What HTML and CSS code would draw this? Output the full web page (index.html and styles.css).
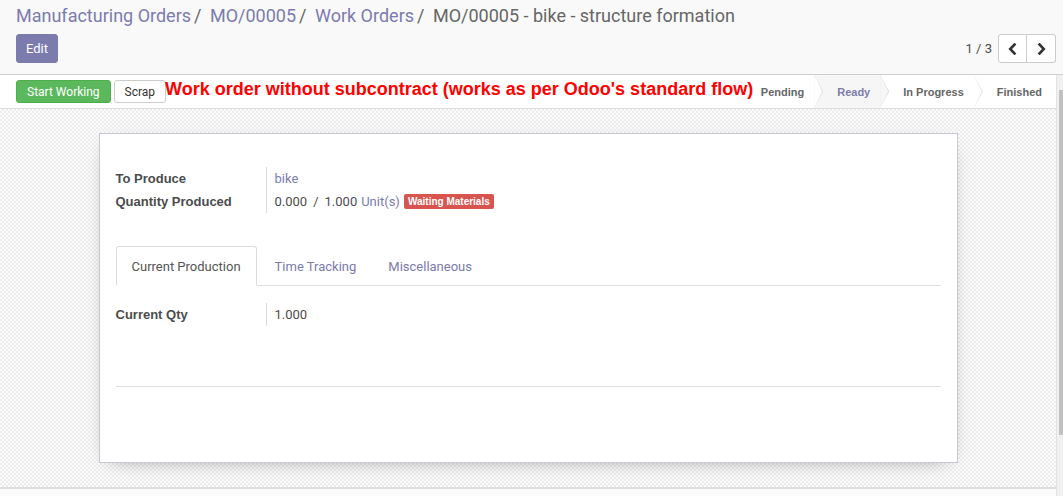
FILE: index.html
```html
<!DOCTYPE html>
<html>
<head>
<meta charset="utf-8">
<link rel="stylesheet" href="styles.css">
</head>
<body>
<div class="control-panel">
  <div class="breadcrumb">
    <a class="crumb">Manufacturing Orders</a><span class="sep">/</span>
    <a class="crumb">MO/00005</a><span class="sep">/</span>
    <a class="crumb">Work Orders</a><span class="sep">/</span>
    <span class="crumb current">MO/00005 - bike - structure formation</span>
  </div>
  <div class="cp-row">
    <button class="btn btn-edit">Edit</button>
    <div class="pager">
      <span class="pager-value">1 / 3</span>
      <div class="pager-btns">
        <button class="pbtn"><svg width="9" height="12" viewBox="0 0 9 12"><path d="M6.5 1.5 L2.2 6 L6.5 10.5" fill="none" stroke="#333" stroke-width="2.6" stroke-linecap="square"/></svg></button>
        <button class="pbtn"><svg width="9" height="12" viewBox="0 0 9 12"><path d="M2.5 1.5 L6.8 6 L2.5 10.5" fill="none" stroke="#333" stroke-width="2.6" stroke-linecap="square"/></svg></button>
      </div>
    </div>
  </div>
</div>
<div class="content">
  <div class="main">
    <div class="statusbar">
      <div class="sb-buttons">
        <button class="btn btn-green">Start Working</button>
        <button class="btn btn-white">Scrap</button>
      </div>
      <div class="note">Work order without subcontract (works as per Odoo's standard flow)</div>
      <div class="stages">
        <div class="stage first">Pending</div>
        <div class="stage active">Ready</div>
        <div class="stage">In Progress</div>
        <div class="stage last">Finished</div>
      </div>
    </div>
    <div class="sheet-bg">
      <div class="sheet">
        <div class="fields">
          <div class="label">To Produce</div>
          <div class="value"><a class="link">bike</a></div>
          <div class="label">Quantity Produced</div>
          <div class="value"><span>0.000</span><span class="slash">/</span><span>1.000</span><a class="link unit">Unit(s)</a><span class="badge">Waiting Materials</span></div>
        </div>
        <div class="tabs">
          <div class="tab active">Current Production</div>
          <div class="tab">Time Tracking</div>
          <div class="tab">Miscellaneous</div>
        </div>
        <div class="tab-pane">
          <div class="fields single">
            <div class="label">Current Qty</div>
            <div class="value">1.000</div>
          </div>
        </div>
        <div class="rule"></div>
      </div>
    </div>
    <div class="chatter"></div>
  </div>
  <div class="scrollbar"><div class="thumb"></div></div>
</div>
</body>
</html>
```
FILE: styles.css
```css
* { box-sizing: border-box; }
html, body { margin: 0; padding: 0; }
body {
  width: 1063px;
  height: 496px;
  overflow: hidden;
  font-family: Roboto, "Liberation Sans", sans-serif;
  font-size: 13px;
  color: #4c4c4c;
  background: #fafafa;
}
a { cursor: pointer; }
button { font-family: inherit; cursor: pointer; white-space: nowrap; }

.control-panel {
  background: #f9f9f9;
  border-bottom: 1px solid #cfcfcf;
  padding: 4px 7px 11px 16px;
}
.breadcrumb {
  font-size: 18px;
  line-height: 24px;
  white-space: nowrap;
}
.crumb { color: #7c7bad; }
.crumb.current { color: #666; }
.sep { color: #666; margin: 0 4px 0 3px; }
.cp-row {
  margin-top: 6px;
  display: flex;
  align-items: center;
  justify-content: space-between;
}
.btn {
  border-radius: 3px;
  border: 1px solid transparent;
  padding: 0 10px;
}
.btn-edit {
  height: 29px;
  background: #7c7bad;
  color: #fff;
  font-size: 13px;
  padding: 0 9px;
  border-color: #7c7bad;
}
.pager { display: flex; align-items: center; }
.pager-value { color: #4c4c4c; margin-right: 6px; }
.pager-btns { display: flex; }
.pbtn {
  width: 29px;
  height: 29px;
  background: #fff;
  border: 1px solid #ccc;
  display: flex;
  align-items: center;
  justify-content: center;
  padding: 0;
}
.pbtn:first-child { border-radius: 3px 0 0 3px; }
.pbtn:last-child { border-radius: 0 3px 3px 0; border-left: none; }

.content { display: flex; height: 421px; }
.main { width: 1056px; display: flex; flex-direction: column; }
.scrollbar {
  width: 7px;
  border-left: 1px solid #e2e2e2;
  background: #f0f0f0;
  display: flex;
  justify-content: flex-end;
  padding-top: 15px;
}
.thumb { width: 4px; height: 345px; background: #c1c1c1; }

.statusbar {
  height: 34px;
  background: #fff;
  border-bottom: 1px solid #dcdcdc;
  display: flex;
  align-items: center;
  padding-left: 16px;
}
.sb-buttons { display: flex; gap: 3px; flex: none; }
.btn-green {
  height: 23px;
  font-size: 12px;
  background: #5cb85c;
  border-color: #4cae4c;
  color: #fff;
  padding: 0 10px;
}
.btn-white {
  height: 23px;
  font-size: 12px;
  background: #fff;
  border-color: #ccc;
  color: #333;
  padding: 0 10px;
}
.note {
  flex: none;
  width: 579px;
  position: relative;
  z-index: 2;
  font-family: "Liberation Sans", Arial, sans-serif;
  font-weight: bold;
  font-size: 18px;
  color: #f00;
  white-space: nowrap;
  margin-bottom: 5px;
  margin-left: -1px;
}
.stages {
  flex: none;
  margin-left: auto;
  display: flex;
  align-self: stretch;
}
.stage {
  position: relative;
  display: flex;
  align-items: center;
  white-space: nowrap;
  font-family: "Liberation Sans", Arial, sans-serif;
  font-size: 11px;
  font-weight: bold;
  color: #666;
  padding: 1px 10px 0 23px;
  background: #fff;
}
.stage.first { padding-left: 16px; }
.stage.last { padding-right: 14px; }
.stage.active { background: #f6f6f6; color: #7c7bad; }
.stage:not(.last)::before,
.stage:not(.last)::after {
  content: "";
  position: absolute;
  top: 0;
  height: 100%;
  clip-path: polygon(0 0, 100% 50%, 0 100%);
  z-index: 1;
}
.stage:not(.last)::before { right: -9px; width: 9px; background: #dcdcdc; }
.stage:not(.last)::after { right: -8px; width: 8px; background: inherit; }

.sheet-bg {
  flex: none;
  height: 378px;
  padding: 24px 0 24px;
  background-color: #f7f7f7;
  background-image: repeating-conic-gradient(#ededed 0 25%, #fbfbfb 0 50%);
  background-size: 4px 4px;
}
.sheet {
  width: 859px;
  height: 330px;
  margin: 0 auto;
  background: #fff;
  border: 1px solid #c8c8d3;
  box-shadow: 0 5px 20px -12px rgba(0,0,0,0.55);
  padding: 33px 16px 0;
}
.fields {
  display: grid;
  grid-template-columns: 150px 1fr;
  grid-auto-rows: 23px;
}
.label {
  font-family: "Liberation Sans", Arial, sans-serif;
  font-weight: bold;
  display: flex;
  align-items: center;
  color: #4c4c4c;
}
.value {
  border-left: 1px solid #ddd;
  padding-left: 8px;
  display: flex;
  align-items: center;
}
.link { color: #7c7bad; }
.slash { margin: 0 6px; }
.unit { margin-left: 4px; }
.badge {
  margin-left: 4px;
  background: #d9534f;
  color: #fff;
  font-family: "Liberation Sans", Arial, sans-serif;
  font-size: 10px;
  font-weight: bold;
  height: 15px;
  line-height: 15px;
  padding: 0 4px;
  border-radius: 2px;
}
.tabs {
  margin-top: 33px;
  display: flex;
  border-bottom: 1px solid #dcdcdc;
  height: 40px;
}
.tab {
  padding: 0 15px;
  display: flex;
  align-items: center;
  color: #7c7bad;
  border: 1px solid transparent;
  margin-bottom: -1px;
  border-radius: 3px 3px 0 0;
}
.tab.active {
  color: #555;
  background: #fff;
  border-color: #dcdcdc #dcdcdc #fff;
  margin-right: 2px;
}
.tab-pane { padding-top: 17px; height: 100px; }
.rule { border-top: 1px solid #dcdcdc; }

.chatter {
  flex: 1;
  border-top: 2px solid #dedede;
  background: #fbfbfb;
}
```
